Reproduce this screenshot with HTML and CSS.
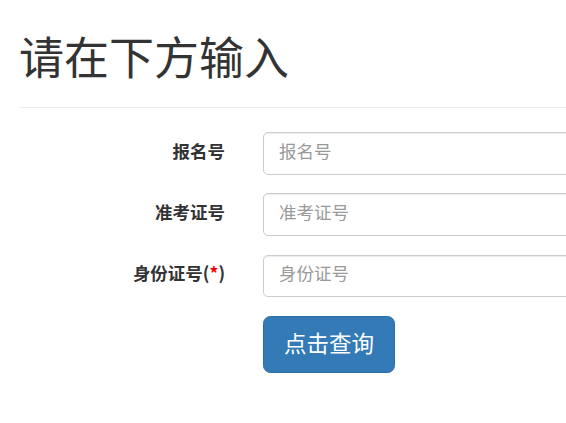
FILE: index.html
```html
<!DOCTYPE html>
<html lang="zh-CN">
<head>
<meta charset="utf-8">
<title>查询</title>
<link rel="stylesheet" href="styles.css">
</head>
<body>
<div class="container">
  <div class="page-header">
    <h1>请在下方输入</h1>
  </div>
  <form class="form">
    <div class="form-group">
      <label class="control-label" for="bmh">报名号</label>
      <input class="form-control" id="bmh" type="text" placeholder="报名号">
    </div>
    <div class="form-group">
      <label class="control-label" for="zkzh">准考证号</label>
      <input class="form-control" id="zkzh" type="text" placeholder="准考证号">
    </div>
    <div class="form-group">
      <label class="control-label" for="sfzh">身份证号(<span class="req">*</span>)</label>
      <input class="form-control" id="sfzh" type="text" placeholder="身份证号">
    </div>
    <div class="form-group">
      <span></span>
      <div><button type="button" class="btn">点击查询</button></div>
    </div>
  </form>
</div>
</body>
</html>
```

FILE: styles.css
```css
html, body {
  margin: 0;
  padding: 0;
  background: #fff;
  overflow: hidden;
}
body {
  font-family: "Noto Sans CJK SC", "Liberation Sans", sans-serif;
  color: #333;
  font-size: 17.5px;
  line-height: 1.42857;
}
.container {
  padding-left: 19px;
  width: 547px;
  overflow: hidden;
}
.page-header {
  margin: 0 0 24px 0;
  padding-bottom: 11px;
  border-bottom: 1px solid #eee;
  margin-right: -20px;
}
.page-header h1 {
  margin: 31px 0 15px 0;
  font-size: 45px;
  font-weight: 400;
  line-height: 50px;
  color: #333;
}
.form-group {
  display: grid;
  grid-template-columns: 206px 320px;
  column-gap: 38px;
  margin-bottom: 18.75px;
}
.control-label {
  text-align: right;
  font-weight: 700;
  font-size: 17.5px;
  padding-top: 5.5px;
  line-height: 25px;
}
.req {
  color: #e00;
}
.form-control {
  box-sizing: border-box;
  width: 100%;
  height: 42.5px;
  padding: 4px 15px 10px 15px;
  font-family: inherit;
  font-size: 17.5px;
  color: #555;
  border: 1px solid #ccc;
  border-radius: 5px;
  box-shadow: inset 0 1px 1px rgba(0,0,0,.075);
  outline: none;
}
.form-control::placeholder {
  color: #999;
}
.btn {
  box-sizing: border-box;
  height: 57.5px;
  padding: 0 20px 6px 20px;
  font-family: inherit;
  font-size: 22.5px;
  color: #fff;
  background: #337ab7;
  border: 1px solid #2e6da4;
  border-radius: 7.5px;
  cursor: pointer;
}
```
